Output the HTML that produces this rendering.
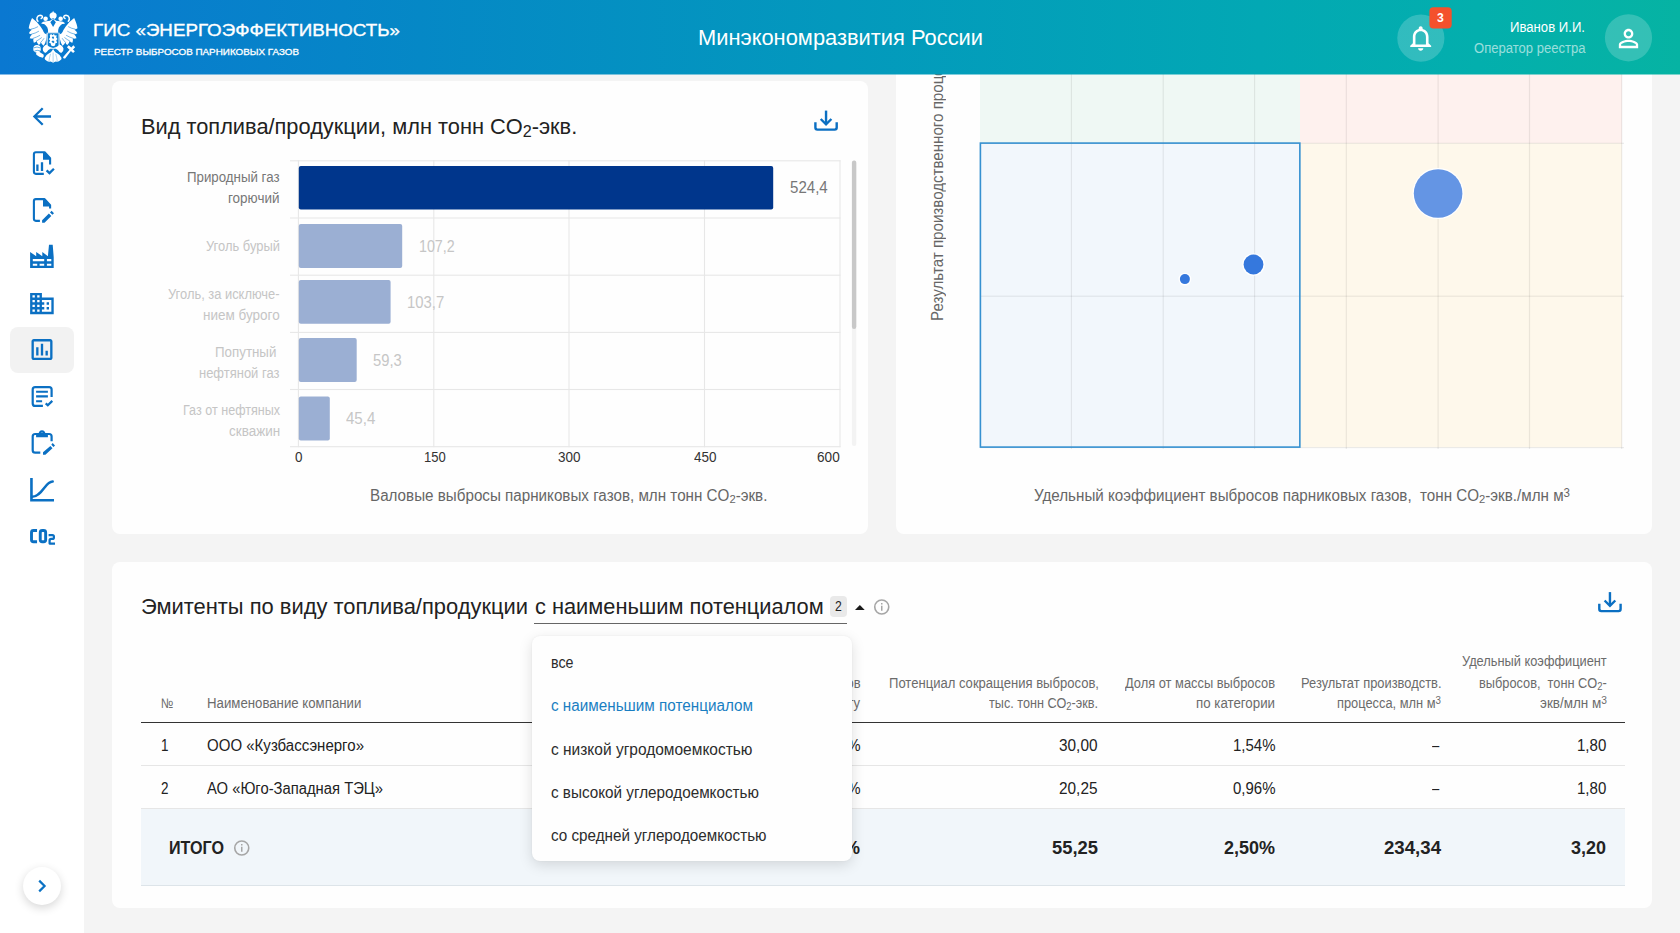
<!DOCTYPE html>
<html lang="ru"><head>
<meta charset="utf-8">
<title>ГИС «Энергоэффективность»</title>
<style>
*{box-sizing:border-box;margin:0;padding:0}
html,body{width:1680px;height:933px;overflow:hidden;background:#f4f4f4;font-family:"Liberation Sans",sans-serif;}
body{position:relative}
.abs{position:absolute}
.t{position:absolute;white-space:nowrap;line-height:1;transform-origin:0 50%;color:#222}
.card{position:absolute;background:#fefefe;border-radius:8px}
#hdr{position:absolute;left:0;top:0;width:1680px;height:74px;background:linear-gradient(90deg,#0a78d1 0%,#0588c6 25%,#0399bd 50%,#02a8b4 75%,#03afad 88%,#06b3a3 100%);z-index:10}
#side{position:absolute;left:0;top:74px;width:84px;height:859px;background:#fff}
.ico{position:absolute}
.hl{position:absolute;height:1px;background:#e3e3e3}
.vl{position:absolute;width:1px;background:#e3e3e3}
</style>
</head>
<body>

<!-- SIDEBAR -->
<div id="side"></div>
<div class="abs" style="left:10px;top:327px;width:64px;height:46px;border-radius:8px;background:#f2f2f2"></div>
<svg class="ico" style="left:0;top:0" width="84" height="933" viewBox="0 0 84 933" fill="none" stroke="#0b70c3" stroke-linejoin="round">
<!-- 1 back arrow -->
<g transform="translate(28.22 102.82) scale(1.14)"><path fill="#0b70c3" stroke="none" d="M20 11H7.83l5.59-5.59L12 4l-8 8 8 8 1.41-1.41L7.83 13H20v-2z"></path></g>
<!-- 2 file chart check -->
<path stroke-width="2.1" d="M43.8 173.85H35.9a2 2 0 0 1-2-2V154.3a2 2 0 0 1 2-2H44.6L50.1 158.2V164.4"></path>
<path fill="#0b70c3" stroke="none" d="M43 152.3H44.8L50.1 158V159.7H43Z"></path>
<path stroke-width="2.3" d="M37.4 164.6V170.9M42 162.3V170.9"></path>
<path stroke-width="2.3" stroke-linejoin="miter" d="M46.6 170.3L49.5 173.1L53.9 168.7"></path>
<!-- 3 file pen -->
<path stroke-width="2.1" d="M39.9 220.85H35.9a2 2 0 0 1-2-2V201.1a2 2 0 0 1 2-2H44.6L50.1 205.1V208.6"></path>
<path fill="#0b70c3" stroke="none" d="M43 199.1H44.8L50.1 204.9V206.5H43Z"></path>
<path fill="#0b70c3" stroke="none" d="M42.1 220.3L48.9 213.5L51.3 215.9L44.5 222.8H42.1Z M50 212.4L51.6 210.8L54 213.2L52.4 214.8Z"></path>
<!-- 4 factory -->
<path fill="#0b70c3" stroke="none" fill-rule="evenodd" d="M30.1 268V251.9L36.2 256.2V251.9L42.3 256.2V251.9L47.9 256.2L49 244.8H52.7L53.7 257V268Z M32.8 259.1H44.2V261.2H32.8Z M46.9 259.1H51.3V261.2H46.9Z M32.8 263.7H37.25V265.8H32.8Z M39.6 263.7H44.2V265.8H39.6Z M46.9 263.7H51.3V265.8H46.9Z"></path>
<!-- 5 business -->
<g transform="translate(27.75 289.35) scale(1.18)"><path fill="#0b70c3" stroke="none" d="M12 7V3H2v18h20V7H12zM6 19H4v-2h2v2zm0-4H4v-2h2v2zm0-4H4V9h2v2zm0-4H4V5h2v2zm4 12H8v-2h2v2zm0-4H8v-2h2v2zm0-4H8V9h2v2zm0-4H8V5h2v2zm10 12h-8v-2h2v-2h-2v-2h2v-2h-2V9h8v10zm-2-8h-2v2h2v-2zm0 4h-2v2h2v-2z"></path></g>
<!-- 6 chart box (active) -->
<g transform="translate(28 335.6) scale(1.1667)"><path fill="#0b70c3" stroke="none" d="M9 17H7v-7h2v7zm4 0h-2V7h2v10zm4 0h-2v-4h2v4zm2 2H5V5h14v14zm0-16H5c-1.1 0-2 .9-2 2v14c0 1.1.9 2 2 2h14c1.1 0 2-.9 2-2V5c0-1.1-.9-2-2-2z"></path></g>
<!-- 7 list check -->
<path stroke-width="2.2" d="M42.9 405.9H35.2a2.5 2.5 0 0 1-2.5-2.5V389.55a2.5 2.5 0 0 1 2.5-2.5H49.1a2.5 2.5 0 0 1 2.5 2.5V397"></path>
<path stroke-width="2.1" d="M36.1 391.8H47.9M36.1 396.4H47.9M36.1 401.2H42.1"></path>
<path stroke-width="2.2" stroke-linejoin="miter" d="M45.7 403.4L47.8 405.3L52.3 400.9"></path>
<!-- 8 clipboard pen -->
<path stroke-width="2.2" d="M40.3 452.7H35.2a2.5 2.5 0 0 1-2.5-2.5V436.5a2.5 2.5 0 0 1 2.5-2.5H49.1a2.5 2.5 0 0 1 2.5 2.5V441.3"></path>
<path fill="#0b70c3" stroke="none" fill-rule="evenodd" d="M36.1 437.2V434.4H38.8A3.3 3.3 0 1 1 45.2 434.4H47.9V437.2Z M42 432.55a1.15 1.15 0 1 0 0.001 0Z"></path>
<path fill="#0b70c3" stroke="none" d="M43 452.3L50.4 446L52.5 448.2L45.4 454.7H43Z M51.3 444.7L52.7 443.1L55 445.5L53.5 447Z"></path>
<!-- 9 curve -->
<path stroke-width="2.6" stroke-linejoin="miter" d="M31.45 478V500.2H54"></path>
<path stroke-width="2.5" stroke-linecap="round" d="M32 496.8C42 496.8 45 481.5 52.7 481.5"></path>
<!-- 10 CO2 -->
<path stroke-width="2.9" d="M37.05 530.45H33.5a2 2 0 0 0-2 2V539.7a2 2 0 0 0 2 2H37.05"></path>
<rect stroke-width="2.9" x="40.25" y="530.45" width="5.4" height="11.25" rx="2"></rect>
<path stroke-width="2.2" d="M48.6 535.1H52.4a1.5 1.5 0 0 1 1.5 1.5V537.4a1.5 1.5 0 0 1-1.5 1.5H51.1a1.5 1.5 0 0 0-1.5 1.5V543.6H55"></path>
</svg>

<!-- collapse button -->
<div class="abs" style="left:23px;top:867px;width:38px;height:38px;border-radius:50%;background:#fff;box-shadow:0 3px 10px rgba(0,0,0,.16)"></div>
<svg class="ico" style="left:33px;top:877px" width="18" height="18" viewBox="0 0 18 18"><path d="M6.2 3.6 L11.6 9 L6.2 14.4" fill="none" stroke="#0b72c4" stroke-width="2.2"></path></svg>

<!-- CARD 1: BAR CHART -->
<div class="card" style="left:112px;top:80.7px;width:756.3px;height:453.2px"></div>
<span class="t" style="color: rgb(34, 34, 34); font-size: 21.8px; left: 141px; top: 116px; transform-origin: 0px 50%;">Вид топлива/продукции, млн тонн CO<span style="font-size:.74em;position:relative;top:.2em">2</span>-экв.</span>
<svg class="ico" style="left:812px;top:108px" width="28" height="26" viewBox="812 108 28 26" fill="none" stroke="#0b6fc2" stroke-width="2.4"><path d="M815.4 122.2V127.6a2 2 0 0 0 2 2H834.7a2 2 0 0 0 2-2V122.2"></path><path d="M826.05 110.6V124"></path><path d="M820.7 119L826.05 124.3L831.4 119"></path></svg>
<svg class="ico" style="left:280px;top:150px" width="600" height="310" viewBox="280 150 600 310">
<rect x="290" y="160.25" width="550.5" height="1.1" fill="#e7e7e7"></rect>
<rect x="290" y="217.45" width="550.5" height="1.1" fill="#e7e7e7"></rect>
<rect x="290" y="274.65" width="550.5" height="1.1" fill="#e7e7e7"></rect>
<rect x="290" y="331.85" width="550.5" height="1.1" fill="#e7e7e7"></rect>
<rect x="290" y="388.95" width="550.5" height="1.1" fill="#e7e7e7"></rect>
<rect x="290" y="446.15" width="550.5" height="1.1" fill="#e7e7e7"></rect>
<rect x="297.85" y="160.3" width="1.1" height="286.9" fill="#e7e7e7"></rect>
<rect x="433.25" y="160.3" width="1.1" height="286.9" fill="#e7e7e7"></rect>
<rect x="568.45" y="160.3" width="1.1" height="286.9" fill="#e7e7e7"></rect>
<rect x="703.95" y="160.3" width="1.1" height="286.9" fill="#e7e7e7"></rect>
<rect x="839.45" y="160.3" width="1.1" height="286.9" fill="#e7e7e7"></rect>
<rect x="298.8" y="166" width="474.4" height="43.60" rx="2" fill="#00368c"></rect>
<rect x="298.8" y="224.05" width="103.4" height="43.85" rx="2" fill="#9bafd3"></rect>
<rect x="298.8" y="280" width="91.8" height="43.80" rx="2" fill="#9bafd3"></rect>
<rect x="298.8" y="338.1" width="57.9" height="43.90" rx="2" fill="#9bafd3"></rect>
<rect x="298.8" y="396.6" width="31.0" height="44.00" rx="2" fill="#9bafd3"></rect>
</svg>
<span class="t" style="color: rgb(119, 119, 119); font-size: 15.8px; left: 790.3px; top: 180px; transform-origin: 0px 50%; transform: scaleX(0.9537);">524,4</span>
<span class="t" style="color: rgb(198, 198, 198); font-size: 15.8px; left: 418.5px; top: 239px; transform-origin: 0px 50%; transform: scaleX(0.9031);">107,2</span>
<span class="t" style="color: rgb(198, 198, 198); font-size: 15.8px; left: 407.3px; top: 295px; transform-origin: 0px 50%; transform: scaleX(0.941);">103,7</span>
<span class="t" style="color: rgb(198, 198, 198); font-size: 15.8px; left: 373px; top: 353px; transform-origin: 0px 50%; transform: scaleX(0.9366);">59,3</span>
<span class="t" style="color: rgb(198, 198, 198); font-size: 15.8px; left: 346px; top: 411px; transform-origin: 0px 50%; transform: scaleX(0.9528);">45,4</span>
<span class="t" style="color: rgb(119, 119, 119); font-size: 14px; left: 187.2px; top: 170px; transform-origin: 0px 50%; transform: scaleX(0.9492);">Природный газ</span>
<span class="t" style="color: rgb(119, 119, 119); font-size: 14px; left: 228.2px; top: 191px; transform-origin: 0px 50%; transform: scaleX(0.9626);">горючий</span>
<span class="t" style="color: rgb(197, 197, 197); font-size: 14px; left: 205.8px; top: 239px; transform-origin: 0px 50%; transform: scaleX(0.9223);">Уголь бурый</span>
<span class="t" style="color: rgb(197, 197, 197); font-size: 14px; left: 168.2px; top: 287px; transform-origin: 0px 50%; transform: scaleX(0.9208);">Уголь, за исключе-</span>
<span class="t" style="color: rgb(197, 197, 197); font-size: 14px; left: 203px; top: 308px; transform-origin: 0px 50%; transform: scaleX(0.9638);">нием бурого</span>
<span class="t" style="color: rgb(197, 197, 197); font-size: 14px; left: 215px; top: 345px; transform-origin: 0px 50%; transform: scaleX(0.9524);">Попутный</span>
<span class="t" style="color: rgb(197, 197, 197); font-size: 14px; left: 199.3px; top: 366px; transform-origin: 0px 50%; transform: scaleX(0.9263);">нефтяной газ</span>
<span class="t" style="color: rgb(197, 197, 197); font-size: 14px; left: 182.6px; top: 403px; transform-origin: 0px 50%; transform: scaleX(0.8988);">Газ от нефтяных</span>
<span class="t" style="color: rgb(197, 197, 197); font-size: 14px; left: 228.6px; top: 424px; transform-origin: 0px 50%; transform: scaleX(0.9622);">скважин</span>
<span class="t" style="color: rgb(51, 51, 51); font-size: 14px; left: 294.75px; top: 450px; transform-origin: 0px 50%; transform: scaleX(0.9619);">0</span>
<span class="t" style="color: rgb(51, 51, 51); font-size: 14px; left: 423.6px; top: 450px; transform-origin: 0px 50%; transform: scaleX(0.9332);">150</span>
<span class="t" style="color: rgb(51, 51, 51); font-size: 14px; left: 558.25px; top: 450px; transform-origin: 0px 50%; transform: scaleX(0.9632);">300</span>
<span class="t" style="color: rgb(51, 51, 51); font-size: 14px; left: 693.75px; top: 450px; transform-origin: 0px 50%; transform: scaleX(0.9632);">450</span>
<span class="t" style="color: rgb(51, 51, 51); font-size: 14px; left: 817.3px; top: 450px; transform-origin: 0px 50%; transform: scaleX(0.9718);">600</span>
<span class="t" style="color: rgb(102, 102, 102); font-size: 15.6px; left: 370.2px; top: 488px; transform-origin: 0px 50%; transform: scaleX(0.9744);">Валовые выбросы парниковых газов, млн тонн CO<span style="font-size:.74em;position:relative;top:.2em">2</span>-экв.</span>
<svg class="ico" style="left:848px;top:156px" width="12" height="294" viewBox="848 156 12 294"><rect x="851.9" y="160.6" width="4.4" height="285.4" rx="2.2" fill="#f3f3f3"></rect><rect x="851.9" y="160.6" width="4.4" height="168.4" rx="2.2" fill="#c8c8c8"></rect></svg>

<!--BAR-->

<!-- CARD 2: SCATTER -->
<div class="card" style="left:895.75px;top:40px;width:756.1px;height:493.9px"></div>
<svg class="ico" style="left:960px;top:40px" width="680" height="420" viewBox="960 40 680 420">
<rect x="980" y="40" width="320" height="103.2" fill="#eff8f4"></rect>
<rect x="1300" y="40" width="321.8" height="103.2" fill="#fef1ee"></rect>
<rect x="1300" y="143.2" width="321.8" height="304" fill="#fef8eb"></rect>
<rect x="980" y="143.2" width="320" height="304" fill="#f2f7fc"></rect>
<rect x="1070.80" y="40" width="1.2" height="409" fill="#000" fill-opacity=".075"></rect>
<rect x="1162.60" y="40" width="1.2" height="409" fill="#000" fill-opacity=".075"></rect>
<rect x="1254.00" y="40" width="1.2" height="409" fill="#000" fill-opacity=".075"></rect>
<rect x="1345.70" y="40" width="1.2" height="409" fill="#000" fill-opacity=".075"></rect>
<rect x="1437.50" y="40" width="1.2" height="409" fill="#000" fill-opacity=".075"></rect>
<rect x="1528.90" y="40" width="1.2" height="409" fill="#000" fill-opacity=".075"></rect>
<rect x="1621.10" y="40" width="1.2" height="409" fill="#000" fill-opacity=".075"></rect>
<rect x="980" y="142.70" width="644" height="1.2" fill="#000" fill-opacity=".075"></rect>
<rect x="980" y="295.60" width="644" height="1.2" fill="#000" fill-opacity=".075"></rect>
<rect x="980" y="447.00" width="644" height="1.2" fill="#000" fill-opacity=".075"></rect>
<rect x="980.4" y="143.1" width="319.45" height="304" fill="none" stroke="#3691d1" stroke-width="1.6"></rect>
<circle cx="1438.1" cy="193.5" r="25.6" fill="#fff"></circle><circle cx="1438.1" cy="193.5" r="24.3" fill="#6495e4"></circle>
<circle cx="1253.5" cy="264.5" r="11.3" fill="#fff"></circle><circle cx="1253.5" cy="264.5" r="9.9" fill="#3578dd"></circle>
<circle cx="1184.9" cy="279.1" r="6.4" fill="#fff"></circle><circle cx="1184.9" cy="279.1" r="5" fill="#3578dd"></circle>
</svg>
<div class="abs" style="left:942.8px;top:321.2px;width:0;height:0;transform:rotate(-90deg);transform-origin:0 0"><span class="t" style="color: rgb(102, 102, 102); font-size: 15.8px; left: 0px; top: -13.37px; transform-origin: 0px 50%; transform: scaleX(0.9566);">Результат производственного процесса, млн м<span style="font-size:.76em;position:relative;top:-.36em">3</span></span></div>
<span class="t" style="color: rgb(102, 102, 102); font-size: 15.6px; left: 1033.6px; top: 488px; transform-origin: 0px 50%; transform: scaleX(0.9734);">Удельный коэффициент выбросов парниковых газов,&nbsp; тонн CO<span style="font-size:.74em;position:relative;top:.2em">2</span>-экв./млн м<span style="font-size:.76em;position:relative;top:-.36em">3</span></span>
<!--SCATTER-->

<!-- CARD 3: TABLE -->
<div class="card" style="left:112px;top:561.9px;width:1539.8px;height:346.6px"></div>
<span class="t" style="color: rgb(34, 34, 34); font-size: 21.8px; left: 140.5px; top: 596px; transform-origin: 0px 50%; transform: scaleX(1.0046);">Эмитенты по виду топлива/продукции</span>
<span class="t" style="color: rgb(34, 34, 34); font-size: 21.8px; left: 535px; top: 596px; transform-origin: 0px 50%;">с наименьшим потенциалом</span>
<div class="abs" style="left:534.25px;top:622.5px;width:312.75px;height:1.2px;background:#666"></div>
<div class="abs" style="left:830px;top:596.25px;width:16.75px;height:20.5px;border-radius:4px;background:#e9e9e9"></div>
<span class="t" style="color: rgb(34, 34, 34); font-size: 14.6px; left: 834.8px; top: 599px; transform-origin: 0px 50%; transform: scaleX(0.8369);">2</span>
<svg class="ico" style="left:853px;top:603px" width="14" height="10" viewBox="853 603 14 10"><path d="M855 610H864.7L859.85 605Z" fill="#1a1a1a"></path></svg>
<svg class="ico" style="left:872px;top:597px" width="20" height="20" viewBox="872 597 20 20" fill="none" stroke="#a6a6a6" stroke-width="1.6"><circle cx="881.75" cy="607" r="7"></circle><path stroke-width="1.5" d="M881.75 605.8V610.8M881.75 603V604.5"></path></svg>
<svg class="ico" style="left:1596px;top:590px" width="28" height="26" viewBox="812.1 108.5 28 26" fill="none" stroke="#0b6fc2" stroke-width="2.4"><path d="M815.4 122.2V127.6a2 2 0 0 0 2 2H834.7a2 2 0 0 0 2-2V122.2"></path><path d="M826.05 110.6V124"></path><path d="M820.7 119L826.05 124.3L831.4 119"></path></svg>
<span class="t" style="color: rgb(107, 107, 107); font-size: 14px; left: 160.5px; top: 696px; transform-origin: 0px 50%; transform: scaleX(0.8316);">№</span>
<span class="t" style="color: rgb(107, 107, 107); font-size: 14px; left: 207px; top: 696px; transform-origin: 0px 50%; transform: scaleX(0.9445);">Наименование компании</span>
<span class="t" style="color: rgb(107, 107, 107); font-size: 14px; left: 801.5px; top: 676px; transform-origin: 0px 50%; transform: scaleX(0.9215);">выбросов</span>
<span class="t" style="color: rgb(107, 107, 107); font-size: 14px; left: 819px; top: 696px; transform-origin: 0px 50%; transform: scaleX(0.9321);">к итогу</span>
<span class="t" style="color: rgb(107, 107, 107); font-size: 14px; left: 889px; top: 676px; transform-origin: 0px 50%; transform: scaleX(0.9326);">Потенциал сокращения выбросов,</span>
<span class="t" style="color: rgb(107, 107, 107); font-size: 14px; left: 988.5px; top: 696px; transform-origin: 0px 50%; transform: scaleX(0.9032);">тыс. тонн CO<span style="font-size:.74em;position:relative;top:.2em">2</span>-экв.</span>
<span class="t" style="color: rgb(107, 107, 107); font-size: 14px; left: 1125px; top: 676px; transform-origin: 0px 50%; transform: scaleX(0.9181);">Доля от массы выбросов</span>
<span class="t" style="color: rgb(107, 107, 107); font-size: 14px; left: 1196px; top: 696px; transform-origin: 0px 50%; transform: scaleX(0.9491);">по категории</span>
<span class="t" style="color: rgb(107, 107, 107); font-size: 14px; left: 1300.75px; top: 676px; transform-origin: 0px 50%; transform: scaleX(0.9206);">Результат производств.</span>
<span class="t" style="color: rgb(107, 107, 107); font-size: 14px; left: 1337px; top: 696px; transform-origin: 0px 50%; transform: scaleX(0.9177);">процесса, млн м<span style="font-size:.76em;position:relative;top:-.36em">3</span></span>
<span class="t" style="color: rgb(107, 107, 107); font-size: 14px; left: 1462px; top: 654px; transform-origin: 0px 50%; transform: scaleX(0.9155);">Удельный коэффициент</span>
<span class="t" style="color: rgb(107, 107, 107); font-size: 14px; left: 1478.75px; top: 676px; transform-origin: 0px 50%; transform: scaleX(0.9126);">выбросов,&nbsp; тонн CO<span style="font-size:.74em;position:relative;top:.2em">2</span>-</span>
<span class="t" style="color: rgb(107, 107, 107); font-size: 14px; left: 1539.5px; top: 696px; transform-origin: 0px 50%; transform: scaleX(0.9632);">экв/млн м<span style="font-size:.76em;position:relative;top:-.36em">3</span></span>
<div class="abs" style="left:141px;top:721.7px;width:1484px;height:1.1px;background:#333"></div>
<div class="abs" style="left:141px;top:765px;width:1484px;height:1px;background:#e6e6e6"></div>
<div class="abs" style="left:141px;top:808px;width:1484px;height:78px;background:#f1f6fa;border-top:1px solid #e6e6e6;border-bottom:1px solid #dde4e9"></div>
<span class="t" style="color: rgb(34, 34, 34); font-size: 15.8px; left: 160.5px; top: 738px; transform-origin: 0px 50%; transform: scaleX(0.8526);">1</span>
<span class="t" style="color: rgb(34, 34, 34); font-size: 15.8px; left: 206.5px; top: 738px; transform-origin: 0px 50%; transform: scaleX(0.9515);">ООО «Кузбассэнерго»</span>
<span class="t" style="color: rgb(34, 34, 34); font-size: 15.8px; left: 817.5px; top: 738px; transform-origin: 0px 50%; transform: scaleX(0.9487);">12,4%</span>
<span class="t" style="color: rgb(34, 34, 34); font-size: 15.8px; left: 1059px; top: 738px; transform-origin: 0px 50%; transform: scaleX(0.9739);">30,00</span>
<span class="t" style="color: rgb(34, 34, 34); font-size: 15.8px; left: 1232.5px; top: 738px; transform-origin: 0px 50%; transform: scaleX(0.9487);">1,54%</span>
<span class="t" style="color: rgb(34, 34, 34); font-size: 15.8px; left: 1432px; top: 738px; transform-origin: 0px 50%; transform: scaleX(0.8242);">–</span>
<span class="t" style="color: rgb(34, 34, 34); font-size: 15.8px; left: 1577px; top: 738px; transform-origin: 0px 50%; transform: scaleX(0.9512);">1,80</span>
<span class="t" style="color: rgb(34, 34, 34); font-size: 15.8px; left: 160.5px; top: 781px; transform-origin: 0px 50%; transform: scaleX(0.8526);">2</span>
<span class="t" style="color: rgb(34, 34, 34); font-size: 15.8px; left: 206.5px; top: 781px; transform-origin: 0px 50%; transform: scaleX(0.9367);">АО «Юго-Западная ТЭЦ»</span>
<span class="t" style="color: rgb(34, 34, 34); font-size: 15.8px; left: 817.5px; top: 781px; transform-origin: 0px 50%; transform: scaleX(0.9487);">12,4%</span>
<span class="t" style="color: rgb(34, 34, 34); font-size: 15.8px; left: 1059px; top: 781px; transform-origin: 0px 50%; transform: scaleX(0.9739);">20,25</span>
<span class="t" style="color: rgb(34, 34, 34); font-size: 15.8px; left: 1232.5px; top: 781px; transform-origin: 0px 50%; transform: scaleX(0.9487);">0,96%</span>
<span class="t" style="color: rgb(34, 34, 34); font-size: 15.8px; left: 1432px; top: 781px; transform-origin: 0px 50%; transform: scaleX(0.8242);">–</span>
<span class="t" style="color: rgb(34, 34, 34); font-size: 15.8px; left: 1577px; top: 781px; transform-origin: 0px 50%; transform: scaleX(0.9512);">1,80</span>
<span class="t" style="color: rgb(34, 34, 34); font-weight: bold; font-size: 17.6px; left: 169px; top: 840px; transform-origin: 0px 50%; transform: scaleX(0.9155);">ИТОГО</span>
<svg class="ico" style="left:231.5px;top:837.5px" width="20" height="20" viewBox="872 597 20 20" fill="none" stroke="#a6a6a6" stroke-width="1.6"><circle cx="881.75" cy="607" r="7"></circle><path stroke-width="1.5" d="M881.75 605.8V610.8M881.75 603V604.5"></path></svg>
<span class="t" style="color: rgb(34, 34, 34); font-weight: bold; font-size: 17.6px; left: 809px; top: 840px; transform-origin: 0px 50%; transform: scaleX(1.0222);">24,8%</span>
<span class="t" style="color: rgb(34, 34, 34); font-weight: bold; font-size: 17.6px; left: 1051.5px; top: 840px; transform-origin: 0px 50%; transform: scaleX(1.0447);">55,25</span>
<span class="t" style="color: rgb(34, 34, 34); font-weight: bold; font-size: 17.6px; left: 1224px; top: 840px; transform-origin: 0px 50%; transform: scaleX(1.0222);">2,50%</span>
<span class="t" style="color: rgb(34, 34, 34); font-weight: bold; font-size: 17.6px; left: 1384px; top: 840px; transform-origin: 0px 50%; transform: scaleX(1.0592);">234,34</span>
<span class="t" style="color: rgb(34, 34, 34); font-weight: bold; font-size: 17.6px; left: 1571px; top: 840px; transform-origin: 0px 50%; transform: scaleX(1.0219);">3,20</span>
<div class="abs" style="left:532.3px;top:636.25px;width:319.3px;height:224.4px;border-radius:8px;background:#fefefe;box-shadow:0 4px 14px rgba(0,0,0,.13),0 0 2px rgba(0,0,0,.06)"></div>
<span class="t" style="color: rgb(44, 44, 44); font-size: 15.8px; left: 551px; top: 655px; transform-origin: 0px 50%; transform: scaleX(0.9034);">все</span>
<span class="t" style="color: rgb(26, 126, 194); font-size: 15.8px; left: 551px; top: 698px; transform-origin: 0px 50%; transform: scaleX(0.9654);">с наименьшим потенциалом</span>
<span class="t" style="color: rgb(44, 44, 44); font-size: 15.8px; left: 551px; top: 742px; transform-origin: 0px 50%; transform: scaleX(0.9808);">с низкой угродомоемкостью</span>
<span class="t" style="color: rgb(44, 44, 44); font-size: 15.8px; left: 551px; top: 785px; transform-origin: 0px 50%; transform: scaleX(0.9662);">с высокой углеродоемкостью</span>
<span class="t" style="color: rgb(44, 44, 44); font-size: 15.8px; left: 551px; top: 828px; transform-origin: 0px 50%; transform: scaleX(0.9638);">со средней углеродоемкостью</span>
<!--TABLE-->

<!-- HEADER -->
<div id="hdr"></div>
<div id="hdr2" class="abs" style="left:0;top:74px;width:1680px;height:1px;opacity:.5;z-index:10;background:linear-gradient(90deg,#0a78d1 0%,#0588c6 25%,#0399bd 50%,#02a8b4 75%,#03afad 88%,#06b3a3 100%)"></div>
<div class="abs" style="z-index:11;left:0;top:0;width:1680px;height:74px">

<span class="t" style="color: rgb(255, 255, 255); -webkit-text-stroke: 0.35px rgb(255, 255, 255); font-size: 17.3px; left: 93.4px; top: 22px; transform-origin: 0px 50%; transform: scaleX(1.0864);">ГИС «ЭНЕРГОЭФФЕКТИВНОСТЬ»</span>
<span class="t" style="color: rgb(255, 255, 255); -webkit-text-stroke: 0.3px rgb(255, 255, 255); font-size: 9.5px; left: 94.1px; top: 47px; transform-origin: 0px 50%; transform: scaleX(1.037);">РЕЕСТР ВЫБРОСОВ ПАРНИКОВЫХ ГАЗОВ</span>
<span class="t" style="color: rgb(255, 255, 255); font-size: 22.6px; left: 698px; top: 27px; transform-origin: 0px 50%; transform: scaleX(0.9676);">Минэкономразвития России</span>
<svg class="ico" style="left:1390px;top:8px" width="270" height="60" viewBox="1390 8 270 60"><circle cx="1420.85" cy="38.1" r="23.6" fill="#fff" fill-opacity=".19"></circle><circle cx="1628.5" cy="37.8" r="23.6" fill="#fff" fill-opacity=".19"></circle></svg>
<svg class="ico" style="left:1404.8px;top:23.1px" width="31.4" height="30.4" viewBox="0 0 24 24" preserveAspectRatio="none"><path fill="#fff" d="M12 22c1.1 0 2-.9 2-2h-4c0 1.1.9 2 2 2zm6-6v-5c0-3.07-1.63-5.64-4.5-6.32V4c0-.83-.67-1.5-1.5-1.5s-1.5.67-1.5 1.5v.68C7.64 5.36 6 7.92 6 11v5l-2 2v1h16v-1l-2-2zm-2 1H8v-6c0-2.48 1.51-4.5 4-4.5s4 2.02 4 4.5v6z"></path></svg>
<svg class="ico" style="left:1425px;top:4px" width="30" height="28" viewBox="1425 4 30 28"><rect x="1429.4" y="7.3" width="22.3" height="21.1" rx="4" fill="#f4512c"></rect></svg>
<span class="t" style="color: rgb(255, 255, 255); font-weight: bold; font-size: 13.5px; left: 1437.2px; top: 11px; transform-origin: 0px 50%; transform: scaleX(0.9048);">3</span>
<span class="t" style="color: rgb(255, 255, 255); font-size: 14px; left: 1510.4px; top: 20px; transform-origin: 0px 50%; transform: scaleX(0.9388);">Иванов И.И.</span>
<span class="t" style="color: rgba(255, 255, 255, 0.6); font-size: 14px; left: 1473.8px; top: 41px; transform-origin: 0px 50%; transform: scaleX(0.9332);">Оператор реестра</span>

<svg class="ico" style="left:1614.2px;top:24.2px" width="29" height="29" viewBox="0 0 24 24"><path fill="#fff" d="M12 5.9c1.16 0 2.1.94 2.1 2.1s-.94 2.1-2.1 2.1S9.9 9.16 9.9 8s.94-2.1 2.1-2.1m0 9c2.97 0 6.1 1.46 6.1 2.1v1.1H5.9V17c0-.64 3.13-2.1 6.1-2.1M12 4C9.79 4 8 5.79 8 8s1.79 4 4 4 4-1.79 4-4-1.79-4-4-4zm0 9c-2.67 0-8 1.34-8 4v3h16v-3c0-2.66-5.33-4-8-4z"></path></svg>
<!--EAGLE--><svg class="ico" style="left:23.2px;top:4.8px" width="61.8" height="63.9" viewBox="0 0 903 933">
<g fill="#fff" stroke="none">
<!-- big crown -->
<path d="M440 82L452 108L470 112Q498 130 492 165Q485 195 462 205L440 190L418 205Q395 195 388 165Q382 130 410 112L428 108Z"></path>
<!-- small crowns -->
<circle cx="330" cy="200" r="33"></circle><circle cx="550" cy="200" r="33"></circle>
<!-- ribbons -->
<path d="M218 236C188 205 205 152 252 148C288 148 296 186 266 196" fill="none" stroke="#fff" stroke-width="22" stroke-linecap="round"></path>
<path d="M662 236C692 205 675 152 628 148C592 148 584 186 614 196" fill="none" stroke="#fff" stroke-width="22" stroke-linecap="round"></path>
<!-- heads + necks (Y) with diamond hole -->
<path fill-rule="evenodd" d="M264 268Q290 238 340 236L395 230L440 196L485 230L540 236Q590 238 616 268Q595 282 572 276Q545 292 524 330Q508 370 514 405L366 405Q372 370 356 330Q335 292 308 276Q285 282 264 268Z M440 205L400 250L440 322L480 250Z"></path>
<!-- left wing -->
<path d="M132 190Q205 240 258 318Q292 365 302 395Q312 420 348 432L340 500Q328 560 302 594Q275 578 262 548Q250 572 232 584Q205 562 200 530Q180 547 158 550Q146 516 152 490Q125 494 98 484Q106 450 132 430Q104 426 86 412Q98 376 128 360Q100 352 84 340Q88 288 132 190Z"></path>
<!-- right wing -->
<path d="M748 190Q675 240 622 318Q588 365 578 395Q568 420 532 432L540 500Q552 560 578 594Q605 578 618 548Q630 572 648 584Q675 562 680 530Q700 547 722 550Q734 516 728 490Q755 494 782 484Q774 450 748 430Q776 426 794 412Q782 376 752 360Q780 352 796 340Q792 288 748 190Z"></path>
<!-- body behind shield -->
<path d="M345 405H535V600Q535 640 500 650H380Q345 640 345 600Z"></path>
<!-- thighs -->
<path d="M352 578Q300 588 288 640Q284 682 322 702Q350 692 368 662Q386 642 398 640L382 600Z"></path>
<path d="M528 578Q580 588 592 640Q596 682 558 702Q530 692 512 662Q494 642 482 640L498 600Z"></path>
<!-- orb (left) -->
<circle cx="205" cy="640" r="56"></circle>
<path d="M232 680Q262 700 300 722Q312 752 290 770Q235 760 195 725Q185 700 200 690Z"></path>
<!-- scepter (right) -->
<path d="M596 782L584 762L680 652L642 618L668 588L706 620L736 588L762 616L730 650L758 676L732 700L700 672L616 780Z"></path>
<!-- tail -->
<path d="M440 842Q420 830 400 826Q370 832 345 814Q312 802 316 775Q345 720 400 690Q420 662 440 640Q460 662 480 690Q535 720 564 775Q568 802 535 814Q510 832 480 826Q460 830 440 842Z"></path>
</g>
<g fill="none" stroke="#0c7fd0" stroke-linecap="round">
<!-- wing feather slits -->
<path stroke-width="8" d="M120 352Q170 345 215 318M125 425Q180 415 228 385M145 488Q200 470 245 445M195 528Q235 505 270 478M258 548Q285 520 305 490"></path>
<path stroke-width="8" d="M760 352Q710 345 665 318M755 425Q700 415 652 385M735 488Q680 470 635 445M685 528Q645 505 610 478M622 548Q595 520 575 490"></path>
<!-- orb bands -->
<path stroke-width="9" d="M158 625Q205 600 252 625M170 672Q205 650 245 668"></path>
<!-- tail slits -->
<path stroke-width="5" d="M440 700V830M400 720Q385 770 380 815M480 720Q495 770 500 815"></path>
</g>
<!-- shield -->
<path fill="#0c7fd0" d="M360 413H520V585Q520 607 440 628Q360 607 360 585Z"></path>
<path fill="#fff" d="M392 438L412 424L428 440L452 424L466 446L492 440L486 474L505 496L486 516L498 552L474 560L468 590L440 602L412 590L404 560L380 552L396 516L376 500L396 476Z"></path>
<path fill="#0c7fd0" d="M420 470L440 455L455 480L440 500Z M415 530L440 520L462 540L440 560Z"></path>
<!-- blue notches between legs and tail -->
<path fill="#0c7fd0" d="M398 640Q370 660 374 692Q392 702 412 682Q432 660 440 640Z M482 640Q510 660 506 692Q488 702 468 682Q448 660 440 640Z"></path>
</svg>
<!--/EAGLE-->
<!--HDR-->
</div>



</body></html>
